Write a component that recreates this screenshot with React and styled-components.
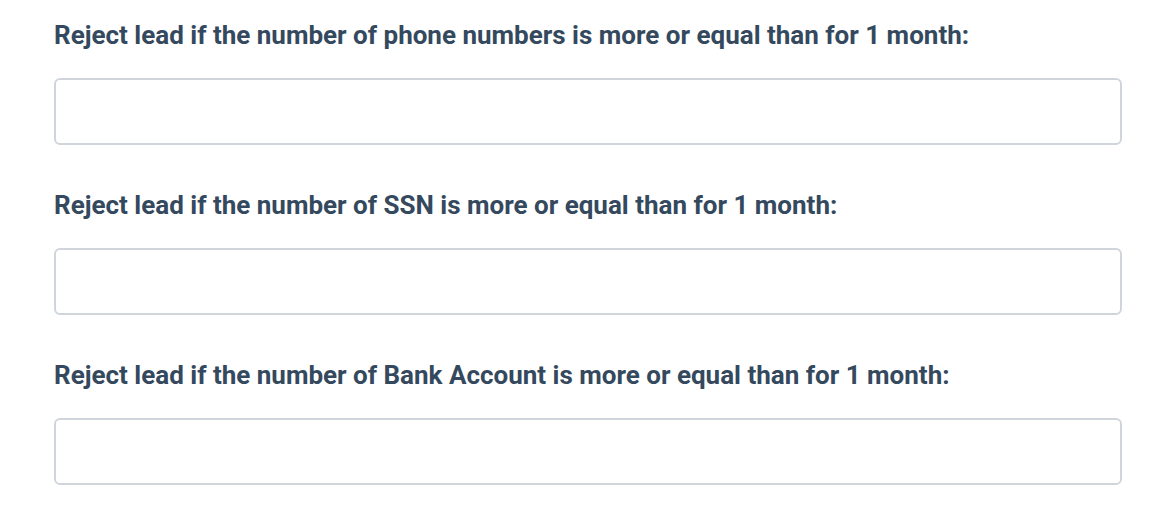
import React from "react";
import styled, { createGlobalStyle } from "styled-components";

const GlobalStyle = createGlobalStyle`
  body {
    margin: 0;
    background: #ffffff;
    font-family: Roboto, "Liberation Sans", sans-serif;
  }
`;

const Form = styled.form`
  display: flex;
  flex-direction: column;
  gap: 45px;
  padding: 20px 52px 0 54px;
`;

const Field = styled.div`
  display: flex;
  flex-direction: column;
  gap: 28px;
`;

const Label = styled.label`
  font-size: 26px;
  line-height: 30px;
  font-weight: 700;
  color: #34495e;
`;

const Input = styled.input`
  box-sizing: border-box;
  width: 100%;
  height: 67px;
  border: 2px solid #d0d5dc;
  border-radius: 6px;
  background: #fff;
  padding: 0 16px;
  font-size: 20px;
  font-family: inherit;
  outline: none;
`;

const fields = [
  "Reject lead if the number of phone numbers is more or equal than for 1 month:",
  "Reject lead if the number of SSN is more or equal than for 1 month:",
  "Reject lead if the number of Bank Account is more or equal than for 1 month:",
];

const App = () => {
  return (
    <>
      <GlobalStyle />
      <Form>
        {fields.map((text, i) => (
          <Field key={i}>
            <Label htmlFor={`limit-${i}`}>{text}</Label>
            <Input id={`limit-${i}`} type="text" />
          </Field>
        ))}
      </Form>
    </>
  );
};

export default App;
